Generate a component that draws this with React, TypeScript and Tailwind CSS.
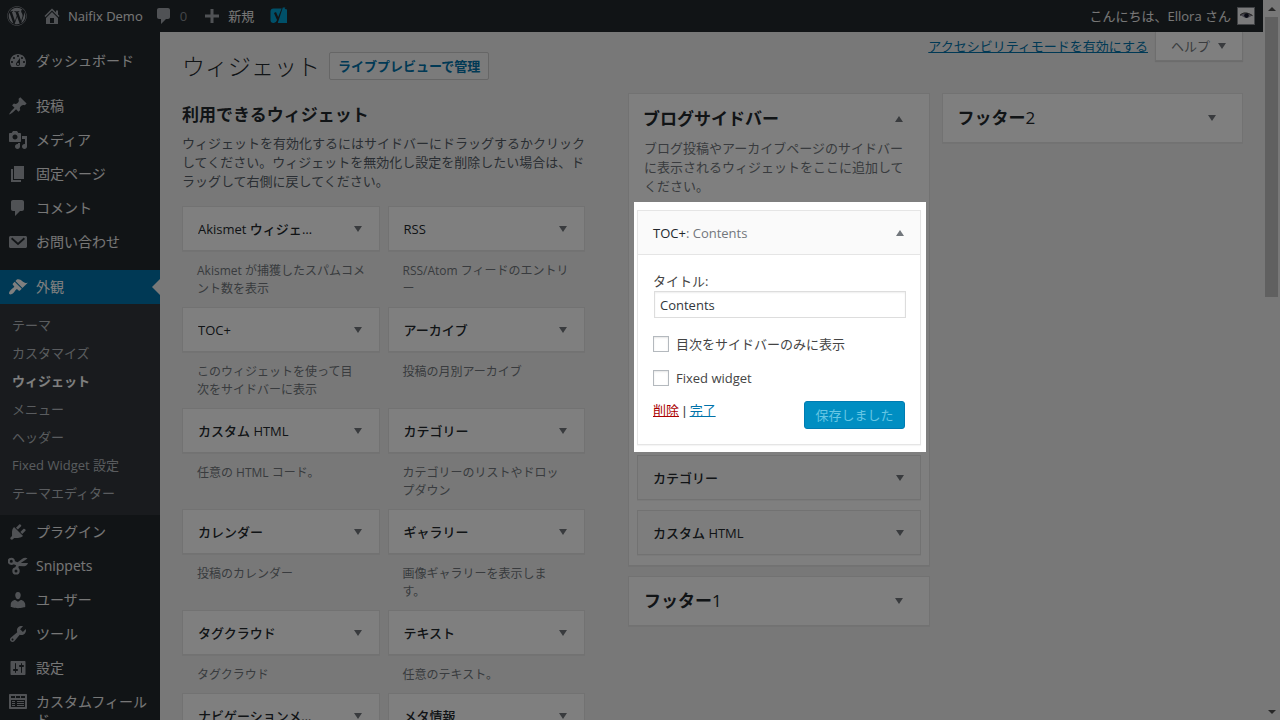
import React, { useState } from "react";
import { FaWordpress } from "react-icons/fa";

type IconName =
  | "home"
  | "comments"
  | "plus"
  | "dashboard"
  | "post"
  | "media"
  | "page"
  | "email"
  | "appearance"
  | "plugins"
  | "snippets"
  | "users"
  | "tools"
  | "settings"
  | "fields";

const iconPaths: Record<IconName, string[]> = {
  home: [
    "M16 8.5l1.53 1.53-1.06 1.06L10 4.6l-6.47 6.49-1.06-1.06L10 2.5l4 4v-2h2v4zm-6-2.46l6 5.99V18H4v-5.97zM12 17v-5H8v5h4z",
  ],
  comments: [
    "M5 2h9c1.1 0 2 .9 2 2v7c0 1.1-.9 2-2 2h-2l-5 5v-5H5c-1.1 0-2-.9-2-2V4c0-1.1.9-2 2-2z",
  ],
  plus: ["M17 8.5v3h-5.5V17h-3v-5.5H3v-3h5.5V3h3v5.500H17z"],
  dashboard: [
    "M3.76 16h12.48c1.1-1.37 1.76-3.11 1.76-5 0-4.42-3.58-8-8-8s-8 3.58-8 8c0 1.89.66 3.63 1.76 5zM10 4c.55 0 1 .45 1 1s-.45 1-1 1-1-.45-1-1 .45-1 1-1zM6 6c.55 0 1 .45 1 1s-.45 1-1 1-1-.45-1-1 .45-1 1-1zm8 0c.55 0 1 .45 1 1s-.45 1-1 1-1-.45-1-1 .45-1 1-1zm-5.37 5.55L12 7v6c0 1.1-.9 2-2 2s-2-.9-2-2c0-.57.24-1.08.63-1.45zM4 10c.55 0 1 .45 1 1s-.45 1-1 1-1-.45-1-1 .45-1 1-1zm12 0c.55 0 1 .45 1 1s-.45 1-1 1-1-.45-1-1 .45-1 1-1zm-5 3c0-.55-.45-1-1-1s-1 .45-1 1 .45 1 1 1 1-.45 1-1z",
  ],
  post: [
    "M10.44 3.02l1.82-1.82 6.36 6.35-1.83 1.82c-1.05-.68-2.48-.57-3.41.36l-.75.75c-.92.93-1.04 2.35-.35 3.41l-1.83 1.82-2.41-2.41-2.8 2.79c-.42.42-3.38 2.71-3.8 2.29s1.86-3.39 2.28-3.81l2.79-2.79L4.1 9.36l1.83-1.82c1.05.69 2.48.57 3.4-.36l.75-.75c.93-.92 1.05-2.35.36-3.41z",
  ],
  media: [
    "M13 11V4c0-.55-.45-1-1-1h-1.67L9 1H5L3.67 3H2c-.55 0-1 .45-1 1v7c0 .55.45 1 1 1h10c.55 0 1-.45 1-1zM7 4.5c1.38 0 2.5 1.12 2.5 2.5S8.38 9.5 7 9.5 4.5 8.38 4.5 7 5.62 4.5 7 4.5z",
    "M14 6h5v10.5c0 1.38-1.12 2.5-2.5 2.5S14 17.88 14 16.5s1.12-2.5 2.5-2.5c.17 0 .34.02.5.05V9h-3V6zm-4 8.05V13h2v3.5c0 1.38-1.12 2.5-2.5 2.5S7 17.88 7 16.5 8.12 14 9.5 14c.17 0 .34.02.5.05z",
  ],
  page: ["M6 15V2h10v13H6zm-1 1h8v2H3V5h2v11z"],
  email: [
    "M2.5 4h15c.8 0 1.5.7 1.5 1.5v9c0 .8-.7 1.5-1.5 1.5h-15C1.7 16 1 15.3 1 14.5v-9C1 4.7 1.7 4 2.5 4zM4.2 5.6L3 6.900l7 6.300 7-6.300-1.200-1.300L10 10.800z",
  ],
  appearance: [
    "M14.48 11.06L7.41 3.99l1.5-1.5c.5-.56 2.3-.47 3.51.32 1.21.8 1.43 1.28 2.91 2.1 1.18.64 2.45 1.26 4.45.85z",
    "M13.77 11.77L6.7 4.7 4.93 6.47c-.39.39-.39 1.02 0 1.41l1.06 1.06c.39.39.39 1.03 0 1.42-.6.6-1.43 1.11-2.21 1.69-.35.26-.7.53-1.01.84C1.43 14.23.4 16.08 1.4 17.07c.99 1 2.84-.03 4.18-1.36.31-.31.58-.66.85-1.02.57-.78 1.08-1.61 1.69-2.21.39-.39 1.02-.39 1.41 0l1.06 1.06c.39.39 1.02.39 1.41 0z",
  ],
  plugins: [
    "M13.11 4.36L9.87 7.6 8 5.73l3.24-3.24c.35-.34 1.05-.2 1.56.32.52.51.66 1.21.31 1.55zm-8 1.77l.91-1.12 9.01 9.01-1.19.84c-.71.71-2.63 1.16-3.82 1.16H6.14L4.9 17.26c-.59.59-1.54.59-2.12 0-.59-.58-.59-1.53 0-2.12l1.24-1.24v-3.88c0-1.13.4-3.19 1.09-3.89zm7.26 3.97l3.24-3.24c.34-.35 1.04-.21 1.55.31.52.51.66 1.21.31 1.55l-3.24 3.25z",
  ],
  snippets: [
    "M3.3 1.700a3.600 3.600 0 1 0 0 7.200 3.600 3.600 0 0 0 0-7.200zm0 2.100a1.500 1.500 0 1 1 0 3 1.500 1.500 0 0 1 0-3z",
    "M8 11.200a3.700 3.700 0 1 0 0 7.400 3.700 3.700 0 0 0 0-7.400zm0 2.200a1.500 1.500 0 1 1 0 3 1.500 1.500 0 0 1 0-3z",
    "M7 12l2.300-5.500L14 3c2-1.400 4-1.500 5.500-.5L13.500 6.500 11 8.500 10.300 12.500z",
    "M5.500 4.500L11 7h9c-.5 2-2 3.200-4 3.200L10 10 5 8z",
  ],
  users: [
    "M10 9.25c-2.27 0-2.73-3.44-2.73-3.44C7 4.02 7.82 2 9.97 2c2.16 0 2.98 2.02 2.71 3.81 0 0-.41 3.44-2.68 3.44zm0 2.57L12.72 10c2.39 0 4.52 2.33 4.52 4.53v2.49s-3.65 1.13-7.24 1.13c-3.65 0-7.24-1.13-7.24-1.13v-2.49c0-2.25 1.94-4.48 4.47-4.48z",
  ],
  tools: [
    "M16.68 9.77c-1.34 1.34-3.3 1.67-4.95.99l-5.41 6.52c-.99.99-2.59.99-3.58 0s-.99-2.59 0-3.57l6.52-5.42c-.68-1.65-.35-3.61.99-4.95 1.28-1.28 3.12-1.62 4.72-1.06l-2.89 2.89 2.82 2.82 2.86-2.87c.53 1.58.18 3.39-1.08 4.65zM3.81 16.21c.4.39 1.04.39 1.43 0 .4-.4.4-1.04 0-1.43-.39-.4-1.03-.4-1.43 0-.39.39-.39 1.03 0 1.43z",
  ],
  settings: [
    "M17.5 16V4c0-.55-.45-1-1-1h-13c-.55 0-1 .45-1 1v12c0 .55.45 1 1 1h13c.55 0 1-.45 1-1zM8 11h1c.55 0 1 .45 1 1s-.45 1-1 1H8v1.5c0 .28-.22.5-.5.5s-.5-.22-.5-.5V13H6c-.55 0-1-.45-1-1s.45-1 1-1h1V5.5c0-.28.22-.5.5-.5s.5.22.5.5V11zm5-2h-1c-.55 0-1-.45-1-1s.45-1 1-1h1V5.5c0-.28.22-.5.5-.5s.5.22.5.5V7h1c.55 0 1 .45 1 1s-.45 1-1 1h-1v5.5c0 .28-.22.5-.5.5s-.5-.22-.5-.5V9z",
  ],
  fields: [
    "M2 2h16c.6 0 1 .4 1 1v13c0 .6-.4 1-1 1H2c-.6 0-1-.4-1-1V3c0-.6.4-1 1-1zM3 4v2h4V4zM8 4v2h4V4zM13 4v2h4V4zM3 8v7h14V8z",
    "M4 9h3v1H4zM9 9h7v1H9zM4 11h3v1H4zM9 11h7v1H9zM4 13h3v1H4zM9 13h7v1H9z",
  ],
};

const Icon = ({ name, className = "" }: { name: IconName; className?: string }) => (
  <svg
    viewBox="0 0 20 20"
    className={`size-5 shrink-0 fill-current ${className}`}
    aria-hidden="true"
  >
    {iconPaths[name].map((d) => (
      <path key={d} fillRule="evenodd" d={d} />
    ))}
  </svg>
);

const Toggle = ({ open = false }: { open?: boolean }) => (
  <svg
    viewBox="0 0 8 6"
    className="h-1.5 w-2 shrink-0 fill-[#72777c]"
    aria-hidden="true"
  >
    <path d={open ? "M0 6L4 0l4 6z" : "M0 0h8L4 6z"} />
  </svg>
);

const mainMenu: { label: string; icon: IconName }[] = [
  { label: "投稿", icon: "post" },
  { label: "メディア", icon: "media" },
  { label: "固定ページ", icon: "page" },
  { label: "コメント", icon: "comments" },
  { label: "お問い合わせ", icon: "email" },
];

const subMenu = [
  "テーマ",
  "カスタマイズ",
  "ウィジェット",
  "メニュー",
  "ヘッダー",
  "Fixed Widget 設定",
  "テーマエディター",
];

const lowerMenu: { label: string; icon: IconName }[] = [
  { label: "プラグイン", icon: "plugins" },
  { label: "Snippets", icon: "snippets" },
  { label: "ユーザー", icon: "users" },
  { label: "ツール", icon: "tools" },
  { label: "設定", icon: "settings" },
  { label: "カスタムフィールド", icon: "fields" },
];

const widgets = [
  { title: "Akismet ウィジェット", text: "Akismet が捕獲したスパムコメ\nント数を表示" },
  { title: "RSS", text: "RSS/Atom フィードのエントリ\nー" },
  { title: "TOC+", text: "このウィジェットを使って目\n次をサイドバーに表示" },
  { title: "アーカイブ", text: "投稿の月別アーカイブ" },
  { title: "カスタム HTML", text: "任意の HTML コード。" },
  { title: "カテゴリー", text: "カテゴリーのリストやドロッ\nプダウン" },
  { title: "カレンダー", text: "投稿のカレンダー" },
  { title: "ギャラリー", text: "画像ギャラリーを表示しま\nす。" },
  { title: "タグクラウド", text: "タグクラウド" },
  { title: "テキスト", text: "任意のテキスト。" },
  { title: "ナビゲーションメニュー", text: "サイドバーにメニューを追加" },
  { title: "メタ情報", text: "ログインや RSS のリンク" },
];

const MenuLink = ({ label, icon }: { label: string; icon: IconName }) => (
  <li>
    <a
      href="#"
      className="flex items-start gap-2 px-2 py-2 text-sm leading-[18px] text-[#eeeeee]"
    >
      <Icon name={icon} className="-my-px text-[#a0a5aa]" />
      <span className="min-w-0 break-all">{label}</span>
    </a>
  </li>
);

const AdminBar = () => (
  <header className="flex h-8 shrink-0 items-center justify-between bg-[#23282d] pr-2 pl-[7px] text-[#eeeeee]">
    <nav className="flex items-center">
      <a href="#" aria-label="WordPress" className="mr-[15px] text-[#a0a5aa]">
        <FaWordpress className="size-5" />
      </a>
      <a href="#" className="mr-[11px] flex items-center gap-1.5">
        <Icon name="home" className="text-[#a0a5aa]" />
        Naifix Demo
      </a>
      <a href="#" className="mr-[15px] flex items-center gap-1.5 text-[#a0a5aa]">
        <Icon name="comments" />
        <span className="opacity-80">0</span>
      </a>
      <a href="#" className="mr-[15px] flex items-center gap-1.5">
        <Icon name="plus" className="text-[#a0a5aa]" />
        新規
      </a>
      <a href="#" aria-label="Yoast SEO">
        <svg viewBox="0 0 20 20" className="size-5">
          <path
            d="M4.5 2.5H14L18 3.500V17H4.500A3 3 0 0 1 1.500 14V5.500A3 3 0 0 1 4.500 2.500z"
            fill="#00a0d2"
          />
          <path
            d="M6 6.500l2.800 6.500M14.500 1L9 14.500C8.200 16.800 7.500 18 5 18.200"
            fill="none"
            stroke="#23282d"
            strokeWidth="2.200"
          />
          <path d="M13.800 1.500h2.500l-6 15.500H8.800z" fill="#00a0d2" />
        </svg>
      </a>
    </nav>
    <a href="#" className="flex items-center gap-1.5">
      こんにちは、Ellora さん
      <svg viewBox="0 0 18 18" className="size-[18px]" aria-hidden="true">
        <rect width="18" height="18" fill="#82878c" />
        <rect x="1" y="1" width="16" height="16" fill="#f4f4f6" />
        <path d="M3 8.500C5 6 9 5 15 8.500c-3.500 3-7.500 3-10 .6z" fill="#8b8798" />
        <path d="M3 8.300C6 5.200 10 5 15.500 8.600" fill="none" stroke="#222" />
        <circle cx="9.500" cy="8.600" r="2.300" fill="#15172b" />
      </svg>
    </a>
  </header>
);

const SideMenu = () => (
  <nav className="w-40 shrink-0 overflow-hidden bg-[#23282d] pt-3">
    <ul>
      <MenuLink label="ダッシュボード" icon="dashboard" />
    </ul>
    <ul className="mt-[11px]">
      {mainMenu.map((item) => (
        <MenuLink key={item.label} {...item} />
      ))}
    </ul>
    <div className="mt-[11px]">
      <a
        href="#"
        className="relative flex items-center gap-2 bg-[#0073aa] px-2 py-2 text-sm leading-[18px] text-white"
      >
        <Icon name="appearance" className="-my-px" />
        外観
        <svg
          viewBox="0 0 8 16"
          className="absolute top-[9px] right-0 h-4 w-2 fill-[#f1f1f1]"
          aria-hidden="true"
        >
          <path d="M8 0v16L0 8z" />
        </svg>
      </a>
      <ul className="bg-[#32373c] pt-[7px] pb-2">
        {subMenu.map((label) => (
          <li key={label}>
            <a
              href="#"
              className={
                label === "ウィジェット"
                  ? "block px-3 py-[5px] leading-[18px] font-bold text-white"
                  : "block px-3 py-[5px] leading-[18px] text-[#b4b9be]"
              }
            >
              {label}
            </a>
          </li>
        ))}
      </ul>
    </div>
    <ul>
      {lowerMenu.map((item) => (
        <MenuLink key={item.label} {...item} />
      ))}
    </ul>
  </nav>
);

const WidgetBar = ({ title }: { title: string }) => (
  <button
    type="button"
    className="flex h-[45px] w-full items-center justify-between border border-[#e5e5e5] bg-[#fafafa] pr-4 pl-[15px] font-medium text-[#23282d] shadow-[0_1px_1px_rgba(0,0,0,0.04)]"
  >
    <span>{title}</span>
    <Toggle />
  </button>
);

const AvailableWidgets = () => (
  <section>
    <h2 className="mt-2.5 text-[17px] leading-6 font-bold text-[#23282d]">
      利用できるウィジェット
    </h2>
    <p className="mt-[7px] leading-[19px] text-[#555d66]">
      ウィジェットを有効化するにはサイドバーにドラッグするかクリックしてください。ウィジェットを無効化し設定を削除したい場合は、ドラッグして右側に戻してください。
    </p>
    <div className="mt-[15px] grid grid-cols-2 gap-x-2">
      {widgets.map((widget) => (
        <div key={widget.title} className="min-w-0">
          <button
            type="button"
            className="flex h-[45px] w-full items-center justify-between border border-[#e5e5e5] bg-white pr-[17px] pl-[15px] font-medium text-[#23282d] shadow-[0_1px_1px_rgba(0,0,0,0.04)]"
          >
            <span className="mr-10 truncate">{widget.title}</span>
            <Toggle />
          </button>
          <p className="pt-[11px] pr-2 pb-[9px] pl-[15px] text-xs leading-[18px] whitespace-pre-line text-[#72777c]">
            {widget.text}
          </p>
        </div>
      ))}
    </div>
  </section>
);

const TocWidget = () => {
  const [title, setTitle] = useState("Contents");
  const checkbox =
    "size-4 appearance-none border border-[#b4b9be] bg-white shadow-[inset_0_1px_2px_rgba(0,0,0,0.1)]";

  return (
    <div className="relative border border-[#e5e5e5] bg-white shadow-[0_1px_1px_rgba(0,0,0,0.04)]">
      {/* spotlight: everything outside of this box is dimmed */}
      <div className="pointer-events-none absolute -top-[9px] -right-1.5 -bottom-2 -left-1 z-50 shadow-[0_0_0_2000px_rgba(0,0,0,0.5)]" />
      <button
        type="button"
        className="flex h-11 w-full items-center justify-between border-b border-[#e5e5e5] bg-[#fafafa] pr-4 pl-[15px] text-[#23282d]"
      >
        <span className="font-medium">
          TOC+<span className="text-[#72777c]">: Contents</span>
        </span>
        <Toggle open />
      </button>
      <form className="px-[15px] pt-[17px] pb-[15px] text-[#444444]">
        <label htmlFor="toc-title" className="block leading-[19px]">
          タイトル:
        </label>
        <input
          id="toc-title"
          type="text"
          value={title}
          onChange={(e) => setTitle(e.target.value)}
          className="ml-px block h-[27px] w-full border border-[#dddddd] bg-white px-[5px] text-[#32373c] shadow-[inset_0_1px_2px_rgba(0,0,0,0.07)]"
        />
        <div className="mt-4 flex items-center gap-[7px]">
          <input id="toc-sidebar" type="checkbox" className={checkbox} />
          <label htmlFor="toc-sidebar" className="leading-5">
            目次をサイドバーのみに表示
          </label>
        </div>
        <div className="mt-3.5 flex items-center gap-[7px]">
          <input id="toc-fixed" type="checkbox" className={checkbox} />
          <label htmlFor="toc-fixed" className="leading-5">
            Fixed widget
          </label>
        </div>
        <div className="mt-3 flex items-start justify-between leading-5">
          <p>
            <a href="#" className="text-[#aa0000] underline">
              削除
            </a>
            <span className="font-['Liberation_Sans',sans-serif]"> | </span>
            <a href="#" className="text-[#0073aa] underline">
              完了
            </a>
          </p>
          <button
            type="button"
            disabled
            className="mt-px h-7 rounded-[3px] border border-[#007cb2] bg-[#008ec2] px-2.5 text-[#66c6e4]"
          >
            保存しました
          </button>
        </div>
      </form>
    </div>
  );
};

const ClosedArea = ({ number }: { number: number }) => (
  <button
    type="button"
    className="flex h-[50px] w-full items-center justify-between border border-[#e5e5e5] bg-white pr-[26px] pl-[15px] text-[17px] text-[#23282d] shadow-[0_1px_1px_rgba(0,0,0,0.04)]"
  >
    <span>
      <b>フッター</b>
      {number}
    </span>
    <Toggle />
  </button>
);

const SidebarAreas = () => (
  <section className="grid grid-cols-2 items-start gap-x-3">
    <div className="flex flex-col gap-2.5">
      <div className="border border-[#e5e5e5] bg-white px-2 pb-2.5 shadow-[0_1px_1px_rgba(0,0,0,0.04)]">
        <h2 className="flex h-[50px] items-center justify-between pr-[18px] pl-1.5 text-[17px] font-bold text-[#23282d]">
          ブログサイドバー
          <Toggle open />
        </h2>
        <p className="-mt-[5px] mb-3.5 px-[7px] leading-[19px] text-[#72777c]">
          ブログ投稿やアーカイブページのサイドバーに表示されるウィジェットをここに追加してください。
        </p>
        <div className="flex flex-col gap-2.5">
          <TocWidget />
          <WidgetBar title="カテゴリー" />
          <WidgetBar title="カスタム HTML" />
        </div>
      </div>
      <ClosedArea number={1} />
    </div>
    <ClosedArea number={2} />
  </section>
);

const Scrollbar = () => (
  <div
    className="flex w-[17px] shrink-0 flex-col items-center bg-[#f1f1f1] pt-[7px] pb-1.5"
    aria-hidden="true"
  >
    <svg viewBox="0 0 8 4" className="h-1 w-2 shrink-0 fill-[#505050]">
      <path d="M0 4l4-4 4 4z" />
    </svg>
    <div className="mt-1.5 h-[280px] w-[13px] bg-[#c1c1c1]" />
    <svg viewBox="0 0 8 4" className="mt-auto h-1 w-2 shrink-0 fill-[#505050]">
      <path d="M0 0h8L4 4z" />
    </svg>
  </div>
);

export default function App() {
  return (
    <div
      lang="ja"
      className="flex h-screen overflow-hidden bg-[#f1f1f1] font-['Open_Sans','Noto_Sans_CJK_JP',sans-serif] text-[13px] leading-5 text-[#444444]"
    >
      <div className="flex min-w-0 flex-1 flex-col">
        <AdminBar />
        <div className="flex min-h-0 flex-1">
          <SideMenu />
          <main className="min-w-0 flex-1 pr-5 pl-[22px]">
            <div className="flex items-start justify-between">
              <div className="flex items-center gap-[9px] pt-[19px] pb-3">
                <h1 className="text-[23px] leading-[30px] font-light text-[#23282d]">
                  ウィジェット
                </h1>
                <a
                  href="#"
                  className="rounded-xs border border-[#cccccc] bg-[#f7f7f7] px-2 py-[3px] leading-5 font-semibold text-[#0073aa]"
                >
                  ライブプレビューで管理
                </a>
              </div>
              <div className="flex items-start gap-[7px]">
                <a href="#" className="pt-1 text-[#0073aa] underline">
                  アクセシビリティモードを有効にする
                </a>
                <button
                  type="button"
                  className="flex h-[29px] items-center gap-2 border border-t-0 border-[#dddddd] bg-white pr-4 pl-[15px] text-[#72777c] shadow-[0_1px_1px_rgba(0,0,0,0.1)]"
                >
                  ヘルプ
                  <Toggle />
                </button>
              </div>
            </div>
            <div className="grid grid-cols-[403fr_615fr] gap-x-[43px]">
              <AvailableWidgets />
              <SidebarAreas />
            </div>
          </main>
        </div>
      </div>
      <Scrollbar />
    </div>
  );
}
